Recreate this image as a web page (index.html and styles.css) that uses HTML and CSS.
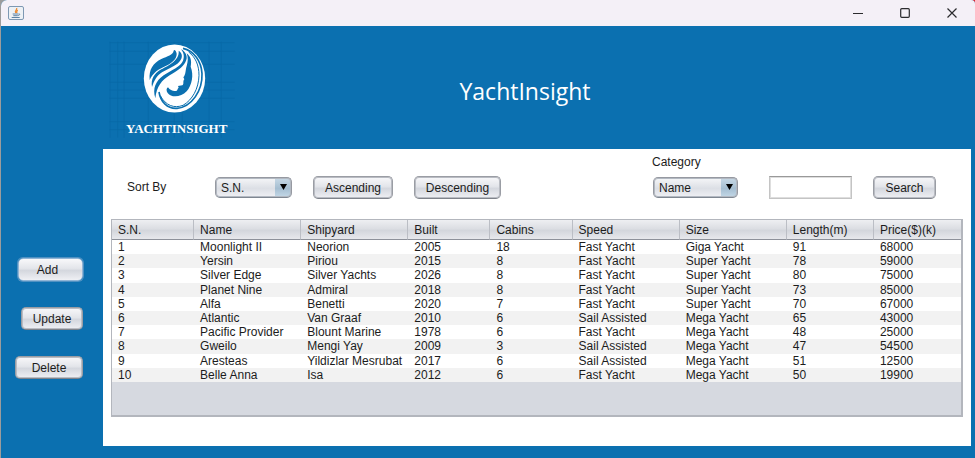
FILE: index.html
```html
<!DOCTYPE html>
<html lang="en">
<head>
<meta charset="utf-8">
<title>YachtInsight</title>
<link rel="stylesheet" href="styles.css">
</head>
<body>
<div class="window">
  <div class="titlebar">
    <svg class="app-icon" width="16" height="14" viewBox="0 0 16 14" aria-hidden="true">
      <rect x=".5" y=".5" width="15" height="13" rx="1.5" fill="#edf1f5" stroke="#7d98b3"/>
      <path d="M8.600 2C9.500 4 6.300 4.600 7.700 7M9.700 4C8.300 5.100 8.500 5.900 8.900 7" fill="none" stroke="#ee8d35" stroke-width="1.300"/>
      <path d="M4.700 8h5.500M10.500 8c1.800-.5 1.500 1.300-.4 1.500M5.300 9.700h4.500M3.700 11.500h8" fill="none" stroke="#5d83a5"/>
    </svg>
    <div class="window-controls">
      <button class="window-button" aria-label="Minimize"><svg width="10" height="10" viewBox="0 0 10 10"><path d="M0 5.500h10"/></svg></button>
      <button class="window-button" aria-label="Maximize"><svg width="10" height="10" viewBox="0 0 10 10"><rect x=".7" y=".7" width="8.600" height="8.600" rx="1"/></svg></button>
      <button class="window-button" aria-label="Close"><svg width="10" height="10" viewBox="0 0 10 10"><path d="M.5.5l9 9M9.500.5l-9 9"/></svg></button>
    </div>
  </div>

  <div class="app">
    <nav class="sidebar" aria-label="Records">
      <button class="button button-add">Add</button>
      <button class="button button-update">Update</button>
      <button class="button button-delete">Delete</button>
    </nav>

    <header class="header">
      <svg class="logo" width="140" height="105" viewBox="0 0 420 315" role="img" aria-label="YachtInsight logo">
        <path class="logo-grid" d="M28 23H404M28 49H404M28 88H404M28 142H404M28 165H404M28 190H404M28 260H404M28 284H404M30 20V308M53 20V308M72 20V308M145 20V308M223 20V308M247 20V308M327 20V308M364 20V308"/>
        <ellipse cx="223.500" cy="130.500" rx="92" ry="102" fill="#fff"/>
        <g fill="#0b70b0">
          <path d="M221 47C219 60 202 63 184 72C160 84 146 102 149 135C158 113 177 102 197 93C215 85 231 71 230 56C229 47 222 42 221 47Z"/>
          <path d="M236 47C248 54 249 68 238 80C226 94 205 100 186 112C172 121 163 135 156 156C152 132 163 115 184 103C206 91 239 76 236 47Z"/>
          <path d="M243 43C259 51 265 67 256 82C247 99 230 108 209 121C185 136 170 154 166 190C157 160 167 138 191 121C214 105 241 96 249 77C254 65 251 52 243 43Z"/>
          <path d="M260 55C274 66 275 80 272 95C282 120 276 150 260 169C243 187 214 189 203 174C198 167 199 160 204 157C210 166 219 169 227 168C234 167 231 161 236 158L234 153L247 151C253 147 247 140 253 133L250 127C258 118 256 105 260 93C264 79 265 68 260 55Z"/>
        </g>
        <path d="M249 40C282 48 304 78 306 116C308 167 275 216 231 220C202 222 182 201 177 171" fill="none" stroke="#0b70b0" stroke-width="5"/>
        <path d="M266 51C287 67 297 91 297 121C296 161 277 195 249 211C223 221 197 212 181 182" fill="none" stroke="#0b70b0" stroke-width="3"/>
        <text class="logo-text" x="78" y="294">YACHTINSIGHT</text>
      </svg>
      <h1 class="title">YachtInsight</h1>
    </header>

    <main class="panel">
      <div class="toolbar">
        <div class="tools">
          <label class="sort-label" for="sort">Sort By</label>
          <span class="select select-sort">
            <select id="sort"><option>S.N.</option><option>Name</option><option>Built</option></select>
            <svg class="arrow" width="7" height="6" viewBox="0 0 7 6" aria-hidden="true"><path d="M0 0h7L3.500 6z"/></svg>
          </span>
          <button class="button button-ascending">Ascending</button>
          <button class="button button-descending">Descending</button>
        </div>
        <div class="tools">
          <div class="category">
            <label class="category-label" for="category">Category</label>
            <span class="select select-category">
              <select id="category"><option>Name</option><option>Shipyard</option><option>Speed</option></select>
              <svg class="arrow" width="7" height="6" viewBox="0 0 7 6" aria-hidden="true"><path d="M0 0h7L3.500 6z"/></svg>
            </span>
          </div>
          <input class="search-field" type="text" aria-label="Search text">
          <button class="button button-search">Search</button>
        </div>
      </div>

      <div class="table-pane">
        <table class="yachts">
          <colgroup>
            <col class="col-sn"><col class="col-name"><col class="col-shipyard"><col class="col-built"><col class="col-cabins"><col class="col-speed"><col class="col-size"><col class="col-length"><col class="col-price">
          </colgroup>
          <thead>
            <tr><th>S.N.</th><th>Name</th><th>Shipyard</th><th>Built</th><th>Cabins</th><th>Speed</th><th>Size</th><th>Length(m)</th><th>Price($)(k)</th></tr>
          </thead>
          <tbody>
            <tr><td>1</td><td>Moonlight II</td><td>Neorion</td><td>2005</td><td>18</td><td>Fast Yacht</td><td>Giga Yacht</td><td>91</td><td>68000</td></tr>
            <tr><td>2</td><td>Yersin</td><td>Piriou</td><td>2015</td><td>8</td><td>Fast Yacht</td><td>Super Yacht</td><td>78</td><td>59000</td></tr>
            <tr><td>3</td><td>Silver Edge</td><td>Silver Yachts</td><td>2026</td><td>8</td><td>Fast Yacht</td><td>Super Yacht</td><td>80</td><td>75000</td></tr>
            <tr><td>4</td><td>Planet Nine</td><td>Admiral</td><td>2018</td><td>8</td><td>Fast Yacht</td><td>Super Yacht</td><td>73</td><td>85000</td></tr>
            <tr><td>5</td><td>Alfa</td><td>Benetti</td><td>2020</td><td>7</td><td>Fast Yacht</td><td>Super Yacht</td><td>70</td><td>67000</td></tr>
            <tr><td>6</td><td>Atlantic</td><td>Van Graaf</td><td>2010</td><td>6</td><td>Sail Assisted</td><td>Mega Yacht</td><td>65</td><td>43000</td></tr>
            <tr><td>7</td><td>Pacific Provider</td><td>Blount Marine</td><td>1978</td><td>6</td><td>Fast Yacht</td><td>Mega Yacht</td><td>48</td><td>25000</td></tr>
            <tr><td>8</td><td>Gweilo</td><td>Mengi Yay</td><td>2009</td><td>3</td><td>Sail Assisted</td><td>Mega Yacht</td><td>47</td><td>54500</td></tr>
            <tr><td>9</td><td>Aresteas</td><td>Yildizlar Mesrubat</td><td>2017</td><td>6</td><td>Sail Assisted</td><td>Mega Yacht</td><td>51</td><td>12500</td></tr>
            <tr><td>10</td><td>Belle Anna</td><td>Isa</td><td>2012</td><td>6</td><td>Fast Yacht</td><td>Mega Yacht</td><td>50</td><td>19900</td></tr>
          </tbody>
        </table>
      </div>
    </main>
  </div>
</div>
</body>
</html>
```
FILE: styles.css
```css
* {
  box-sizing: border-box;
}

body {
  margin: 0;
  background: linear-gradient(90deg, #9c9c9c 50%, #e8222c 50%);
  color: #1c1c1c;
  font: 12px/14px "Liberation Sans", Arial, sans-serif;
}

button,
select,
input {
  font: inherit;
  color: inherit;
}

.window {
  display: flex;
  flex-direction: column;
  min-height: 100vh;
  margin-left: 1px;
  border-radius: 6px 4px 0 0;
  background: #0b70b0;
  overflow: hidden;
}

.titlebar {
  display: flex;
  align-items: center;
  justify-content: space-between;
  height: 26px;
  padding: 0 0 0 7px;
  background: #f4f0f7;
}

.window-controls {
  display: flex;
}

.window-button {
  display: flex;
  align-items: center;
  justify-content: center;
  width: 47px;
  height: 26px;
  padding: 0;
  border: 0;
  background: none;
}

.window-button svg {
  fill: none;
  stroke: #2b2b2e;
  stroke-width: 1.2;
}

.app {
  flex: 1;
  display: grid;
  grid-template-columns: 102px 1fr;
  grid-template-rows: 123px 1fr;
  padding: 0 4px 12px 0;
}

.sidebar {
  grid-row: 1 / 3;
  display: flex;
  flex-direction: column;
  align-items: flex-end;
  gap: 26px;
  padding: 232px 20px 0 0;
}

.header {
  display: grid;
  grid-template-columns: 1fr auto 1fr;
  align-items: center;
  padding: 0 24px 0 0;
}

.logo {
  margin: -1px 0 0 -3px;
}

.logo-grid {
  fill: none;
  stroke: #0868a6;
  stroke-width: 2;
}

.logo-text {
  fill: #fff;
  font: bold 39px "Liberation Serif", serif;
}

.title {
  margin: 6px 0 0;
  color: #fff;
  font: 23px/30px "Open Sans", "Noto Sans", sans-serif;
}

.panel {
  display: flex;
  flex-direction: column;
  padding: 0 8px 29px;
  background: #fff;
}

.button {
  height: 23px;
  padding: 0;
  border: 1px solid #9a9da4;
  border-bottom-color: #7f838b;
  border-radius: 5px;
  background: linear-gradient(#f8f8fa, #e3e5ea 45%, #d4d7de 55%, #eff0f4);
  box-shadow: inset 0 0 0 1px #b9bcc3;
}

.button-add {
  width: 65px;
  padding-right: 6px;
  border-color: #91b5d6;
  box-shadow: 0 0 0 1px #4f91c2;
}

.button-update {
  width: 62px;
}

.button-delete {
  width: 68px;
}

.button-ascending {
  width: 80px;
}

.button-descending {
  width: 87px;
}

.button-search {
  width: 63px;
}

.toolbar {
  display: flex;
  justify-content: space-between;
  height: 70px;
  padding: 6px 27px 20px 16px;
}

.tools {
  display: flex;
  align-items: flex-end;
  gap: 21px;
}

.sort-label {
  width: 67px;
  line-height: 23px;
}

.select {
  position: relative;
  display: block;
  margin-bottom: 1px;
}

.select select {
  display: block;
  width: 100%;
  height: 21px;
  padding: 0 20px 0 5px;
  border: 1px solid #9699a1;
  border-bottom-color: #7f8791;
  border-radius: 5px;
  appearance: none;
  background:
    linear-gradient(#c8d9e6, #a5bed1 55%, #c3d8e7) right / 16px 100% no-repeat,
    linear-gradient(#f5f6f8, #dcdfe5 55%, #eff0f4);
  box-shadow: inset 0 0 0 1px #b3b9c2;
}

.select-sort {
  width: 77px;
}

.select-category {
  width: 85px;
}

.arrow {
  position: absolute;
  top: 7px;
  right: 5px;
  pointer-events: none;
}

.category {
  width: 95px;
}

.category-label {
  display: block;
  margin: 0 0 8px -1px;
}

.search-field {
  width: 83px;
  height: 23px;
  padding: 2px 4px;
  border: 1px solid #c4c4c4;
  border-top-color: #999;
  border-radius: 0;
  background: #fff;
  box-shadow: inset 0 0 0 1px #dedede;
}

.table-pane {
  flex: 1;
  border: 1px solid #b3b6bd;
  border-right-width: 2px;
  border-bottom-width: 2px;
  background: #d6d9e0;
}

.yachts {
  width: 100%;
  height: 162px;
  table-layout: fixed;
  border-collapse: separate;
  border-spacing: 0;
}

.yachts th,
.yachts td {
  padding: 0 0 0 6px;
  text-align: left;
  white-space: nowrap;
}

.yachts th {
  height: 20px;
  border-right: 1px solid #bbbec5;
  border-bottom: 1px solid #8d919a;
  background: linear-gradient(#eeeff2, #dcdee3 45%, #d3d6dc 55%, #e7e8ec);
  font-weight: normal;
}

.yachts th:last-child {
  border-right: 0;
}

.yachts tbody tr {
  background: #fff;
}

.yachts tbody tr:nth-child(even) {
  background: #f2f2f2;
}

.col-sn {
  width: 82px;
}

.col-name,
.col-shipyard,
.col-speed,
.col-size {
  width: 107px;
}

.col-built,
.col-cabins {
  width: 82px;
}

.col-length,
.col-price {
  width: 87px;
}
```
